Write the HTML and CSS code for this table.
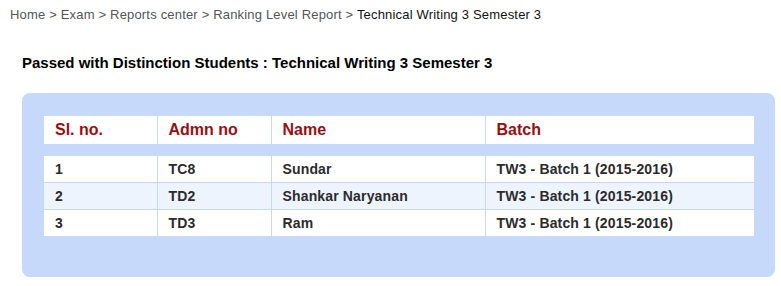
FILE: index.html
```html
<!DOCTYPE html>
<html>
<head>
<meta charset="utf-8">
<link rel="stylesheet" href="styles.css">
</head>
<body>
<div class="crumbs">Home &gt; Exam &gt; Reports center &gt; Ranking Level Report &gt; <span class="current">Technical Writing 3 Semester 3</span></div>
<h1 class="title">Passed with Distinction Students : Technical Writing 3 Semester 3</h1>
<div class="panel">
  <table class="grid">
    <colgroup>
      <col class="c1"><col class="c2"><col class="c3"><col class="c4">
    </colgroup>
    <thead>
      <tr><th>Sl. no.</th><th>Admn no</th><th>Name</th><th>Batch</th></tr>
    </thead>
    <tbody>
      <tr><td>1</td><td>TC8</td><td>Sundar</td><td>TW3 - Batch 1 (2015-2016)</td></tr>
      <tr class="alt"><td>2</td><td>TD2</td><td>Shankar Naryanan</td><td>TW3 - Batch 1 (2015-2016)</td></tr>
      <tr><td>3</td><td>TD3</td><td>Ram</td><td>TW3 - Batch 1 (2015-2016)</td></tr>
    </tbody>
  </table>
</div>
</body>
</html>
```
FILE: styles.css
```css
body {
  margin: 0;
  background: #fff;
  font-family: "Liberation Sans", Arial, sans-serif;
  width: 781px;
}
.crumbs {
  padding: 5px 0 0 10px;
  font-size: 13px;
  line-height: 20px;
  color: #555;
  letter-spacing: 0.18px;
}
.crumbs .current { color: #111; }
.title {
  margin: 28px 0 0 22px;
  font-size: 15px;
  line-height: 20px;
  font-weight: bold;
  color: #000;
}
.panel {
  margin: 20px 6px 0 22px;
  background: #c7d9fb;
  border-radius: 8px;
  padding: 23px 21px 41px 22px;
}
.grid {
  width: 710px;
  border-collapse: collapse;
  table-layout: fixed;
}
.c1 { width: 113px; }
.c2 { width: 114px; }
.c3 { width: 214px; }
.c4 { width: 269px; }
.grid th {
  background: #fff;
  color: #9a0f10;
  font-weight: bold;
  font-size: 16px;
  text-align: left;
  height: 28px;
  padding: 0 0 0 11px;
  border-left: 1px solid #c7d9fb;
  border-bottom: 12px solid #c7d9fb;
}
.grid td {
  background: #fff;
  color: #2b2b2b;
  font-weight: bold;
  font-size: 14px;
  letter-spacing: 0.15px;
  height: 26px;
  padding: 0 0 0 11px;
  border-left: 1px solid #c7d9fb;
  border-bottom: 1px solid #c7d9fb;
}
.grid th:first-child, .grid td:first-child { border-left: none; }
.grid tr.alt td { background: #eef4fe; }
.grid tbody tr:last-child td { border-bottom: none; }
```
